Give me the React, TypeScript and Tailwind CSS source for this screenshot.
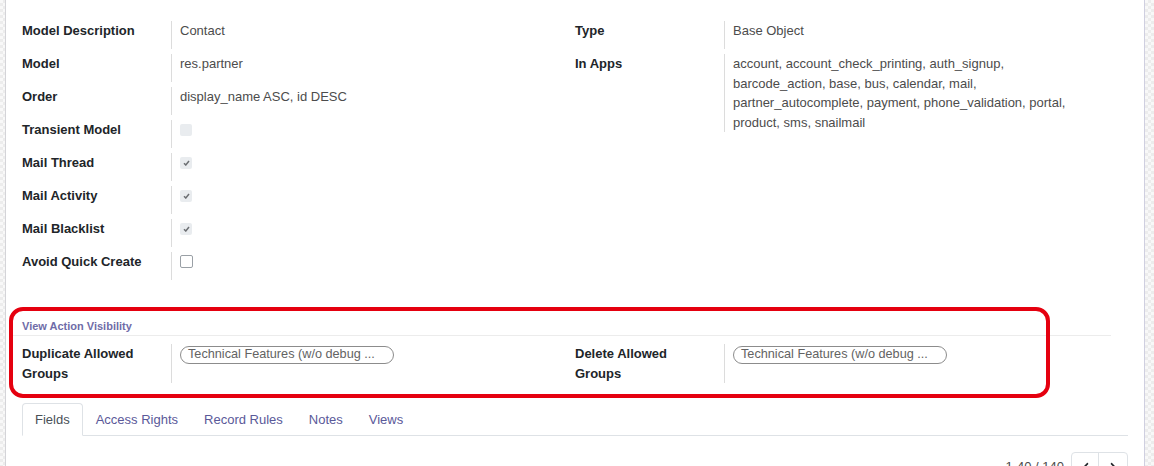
import { FaChevronLeft, FaChevronRight } from "react-icons/fa";

const font = { fontFamily: '"Liberation Sans", Arial, sans-serif' };

type Row = { label: string; value?: string; check?: "on" | "off" | "empty" };

const leftRows: Row[] = [
  { label: "Model Description", value: "Contact" },
  { label: "Model", value: "res.partner" },
  { label: "Order", value: "display_name ASC, id DESC" },
  { label: "Transient Model", check: "off" },
  { label: "Mail Thread", check: "on" },
  { label: "Mail Activity", check: "on" },
  { label: "Mail Blacklist", check: "on" },
  { label: "Avoid Quick Create", check: "empty" },
];

const rightRows: Row[] = [
  { label: "Type", value: "Base Object" },
  {
    label: "In Apps",
    value:
      "account, account_check_printing, auth_signup, barcode_action, base, bus, calendar, mail, partner_autocomplete, payment, phone_validation, portal, product, sms, snailmail",
  },
];

const tabs = ["Fields", "Access Rights", "Record Rules", "Notes", "Views"];

function Checkbox({ state }: { state: "on" | "off" | "empty" }) {
  if (state === "empty") {
    return (
      <span className="mt-[3px] block h-[13px] w-[13px] rounded-[2px] border border-[#9aa0a6] bg-white" />
    );
  }
  return (
    <span className="mt-[4px] flex h-[12px] w-[12px] items-center justify-center rounded-[2px] bg-[#e9ecef]">
      {state === "on" && (
        <svg width="7" height="6" viewBox="0 0 7 6">
          <path d="M1 3.2 L2.8 5 L6 1" fill="none" stroke="#6c6f73" strokeWidth="1.5" />
        </svg>
      )}
    </span>
  );
}

function FieldRow({ row, wide }: { row: Row; wide?: boolean }) {
  return (
    <div className="flex min-h-[33px] pb-[5px]">
      <div className="w-[149px] shrink-0 pr-4 font-bold text-[#212529]">{row.label}</div>
      <div className={`flex-1 border-l border-[#dcdcdc] pl-2 text-[#4c4c4c] ${wide ? "pr-[48px]" : ""}`}>
        {row.check ? <Checkbox state={row.check} /> : row.value}
      </div>
    </div>
  );
}

function GroupsTag() {
  return (
    <span className="mt-[1px] inline-flex h-[18px] w-[214px] items-center rounded-full border border-[#8c8c8c] pl-[7px] text-[12.7px] text-[#636363]">
      Technical Features (w/o debug ...
    </span>
  );
}

function Strip({ edge }: { edge: "left" | "right" }) {
  return (
    <div
      className={`shrink-0 bg-[repeating-conic-gradient(#ececec_0_25%,#f8f8f8_0_50%)] bg-[length:6px_6px] ${
        edge === "left" ? "w-[6px] border-r border-[#d4d4d8]" : "w-[10px] border-l border-[#cfcfe0]"
      }`}
    />
  );
}

export default function App() {
  return (
    <div className="flex min-h-screen bg-white text-[13px] leading-[19.5px]" style={font}>
      <Strip edge="left" />
      <main className="flex-1 px-4 pt-[21px]">
        <div className="grid grid-cols-2">
          <div>
            {leftRows.map((r) => (
              <FieldRow key={r.label} row={r} />
            ))}
          </div>
          <div>
            {rightRows.map((r) => (
              <FieldRow key={r.label} row={r} wide />
            ))}
          </div>
        </div>

        <section className="relative mt-[31px]">
          <div className="-ml-[10px] mr-[17px] border-b border-[#ececec] pb-[1px] pl-[10px] pt-[2px] text-[11px] font-bold leading-[16px] text-[#6f6ca8]">
            View Action Visibility
          </div>
          <div className="mt-2 grid grid-cols-2">
            <div className="flex pb-[5px]">
              <div className="w-[149px] shrink-0 pr-4 font-bold text-[#212529]">Duplicate Allowed Groups</div>
              <div className="flex-1 border-l border-[#dcdcdc] pl-2">
                <GroupsTag />
              </div>
            </div>
            <div className="flex pb-[5px]">
              <div className="w-[149px] shrink-0 pr-4 font-bold text-[#212529]">Delete Allowed Groups</div>
              <div className="flex-1 border-l border-[#dcdcdc] pl-2">
                <GroupsTag />
              </div>
            </div>
          </div>
          {/* highlight frame */}
          <div className="pointer-events-none absolute -bottom-[10px] -left-[13px] -top-[9px] right-[78px] rounded-[14px] border-4 border-[#e5000f]" />
        </section>

        <nav className="mt-[15px] flex border-b border-[#dee2e6]">
          {tabs.map((t, i) => (
            <div
              key={t}
              className={`-mb-px flex h-[33px] items-center px-[12px] ${
                i === 0
                  ? "rounded-t-[4px] border border-b-white border-[#dee2e6] text-[#495057]"
                  : "border border-transparent text-[#5a5999]"
              }`}
            >
              {t}
            </div>
          ))}
        </nav>

        <div className="mt-[16px] flex items-center justify-end gap-[7px]">
          <span className="text-[#4c4c4c]">1-40 / 140</span>
          <div className="flex h-[30px] rounded-[4px] border border-[#dee2e6]">
            <button className="flex w-[27px] items-center justify-center border-r border-[#dee2e6] text-[#212529]">
              <FaChevronLeft size={11} />
            </button>
            <button className="flex w-[28px] items-center justify-center text-[#212529]">
              <FaChevronRight size={11} />
            </button>
          </div>
        </div>
      </main>
      <Strip edge="right" />
    </div>
  );
}
